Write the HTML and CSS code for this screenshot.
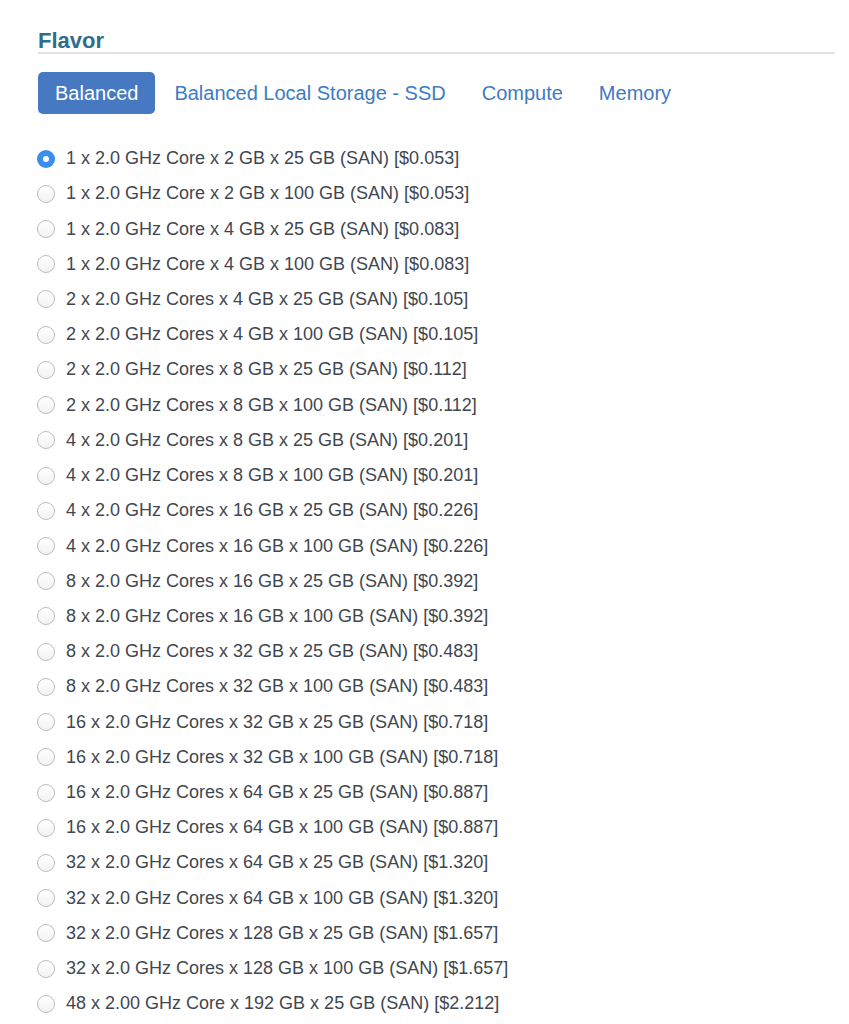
FILE: index.html
```html
<!DOCTYPE html>
<html>
<head>
<meta charset="utf-8">
<link rel="stylesheet" href="styles.css">
</head>
<body>
<div class="panel">
  <h2 class="title">Flavor</h2>
  <ul class="tabs">
    <li class="tab active">Balanced</li>
    <li class="tab">Balanced Local Storage - SSD</li>
    <li class="tab">Compute</li>
    <li class="tab">Memory</li>
  </ul>
  <ul class="options">
    <li class="opt"><span class="radio checked"></span><span class="label">1 x 2.0 GHz Core x 2 GB x 25 GB (SAN) [$0.053]</span></li>
    <li class="opt"><span class="radio"></span><span class="label">1 x 2.0 GHz Core x 2 GB x 100 GB (SAN) [$0.053]</span></li>
    <li class="opt"><span class="radio"></span><span class="label">1 x 2.0 GHz Core x 4 GB x 25 GB (SAN) [$0.083]</span></li>
    <li class="opt"><span class="radio"></span><span class="label">1 x 2.0 GHz Core x 4 GB x 100 GB (SAN) [$0.083]</span></li>
    <li class="opt"><span class="radio"></span><span class="label">2 x 2.0 GHz Cores x 4 GB x 25 GB (SAN) [$0.105]</span></li>
    <li class="opt"><span class="radio"></span><span class="label">2 x 2.0 GHz Cores x 4 GB x 100 GB (SAN) [$0.105]</span></li>
    <li class="opt"><span class="radio"></span><span class="label">2 x 2.0 GHz Cores x 8 GB x 25 GB (SAN) [$0.112]</span></li>
    <li class="opt"><span class="radio"></span><span class="label">2 x 2.0 GHz Cores x 8 GB x 100 GB (SAN) [$0.112]</span></li>
    <li class="opt"><span class="radio"></span><span class="label">4 x 2.0 GHz Cores x 8 GB x 25 GB (SAN) [$0.201]</span></li>
    <li class="opt"><span class="radio"></span><span class="label">4 x 2.0 GHz Cores x 8 GB x 100 GB (SAN) [$0.201]</span></li>
    <li class="opt"><span class="radio"></span><span class="label">4 x 2.0 GHz Cores x 16 GB x 25 GB (SAN) [$0.226]</span></li>
    <li class="opt"><span class="radio"></span><span class="label">4 x 2.0 GHz Cores x 16 GB x 100 GB (SAN) [$0.226]</span></li>
    <li class="opt"><span class="radio"></span><span class="label">8 x 2.0 GHz Cores x 16 GB x 25 GB (SAN) [$0.392]</span></li>
    <li class="opt"><span class="radio"></span><span class="label">8 x 2.0 GHz Cores x 16 GB x 100 GB (SAN) [$0.392]</span></li>
    <li class="opt"><span class="radio"></span><span class="label">8 x 2.0 GHz Cores x 32 GB x 25 GB (SAN) [$0.483]</span></li>
    <li class="opt"><span class="radio"></span><span class="label">8 x 2.0 GHz Cores x 32 GB x 100 GB (SAN) [$0.483]</span></li>
    <li class="opt"><span class="radio"></span><span class="label">16 x 2.0 GHz Cores x 32 GB x 25 GB (SAN) [$0.718]</span></li>
    <li class="opt"><span class="radio"></span><span class="label">16 x 2.0 GHz Cores x 32 GB x 100 GB (SAN) [$0.718]</span></li>
    <li class="opt"><span class="radio"></span><span class="label">16 x 2.0 GHz Cores x 64 GB x 25 GB (SAN) [$0.887]</span></li>
    <li class="opt"><span class="radio"></span><span class="label">16 x 2.0 GHz Cores x 64 GB x 100 GB (SAN) [$0.887]</span></li>
    <li class="opt"><span class="radio"></span><span class="label">32 x 2.0 GHz Cores x 64 GB x 25 GB (SAN) [$1.320]</span></li>
    <li class="opt"><span class="radio"></span><span class="label">32 x 2.0 GHz Cores x 64 GB x 100 GB (SAN) [$1.320]</span></li>
    <li class="opt"><span class="radio"></span><span class="label">32 x 2.0 GHz Cores x 128 GB x 25 GB (SAN) [$1.657]</span></li>
    <li class="opt"><span class="radio"></span><span class="label">32 x 2.0 GHz Cores x 128 GB x 100 GB (SAN) [$1.657]</span></li>
    <li class="opt"><span class="radio"></span><span class="label">48 x 2.00 GHz Core x 192 GB x 25 GB (SAN) [$2.212]</span></li>
  </ul>
</div>
</body>
</html>
```

FILE: styles.css
```css
html, body {
  margin: 0;
  padding: 0;
  background: #ffffff;
}
body {
  font-family: "Liberation Sans", Arial, Helvetica, sans-serif;
  color: #3f4750;
}
.panel {
  padding: 29px 14px 0 38px;
}
.title {
  margin: 0;
  font-size: 22px;
  line-height: 23px;
  font-weight: bold;
  color: #2f6d8c;
  border-bottom: 2px solid #e2e2e2;
}
.tabs {
  list-style: none;
  margin: 18px 0 0 0;
  padding: 0;
  display: flex;
  align-items: center;
}
.tab {
  height: 42px;
  line-height: 42px;
  padding: 0 17px;
  margin-right: 2px;
  font-size: 20px;
  color: #3e7bc4;
  border-radius: 5px;
}
.tab.active {
  background: #4679c1;
  color: #ffffff;
}
.options {
  list-style: none;
  margin: 27px 0 0 0;
  padding: 0;
}
.opt {
  height: 35.22px;
  display: flex;
  align-items: center;
  font-size: 18px;
}
.radio {
  box-sizing: border-box;
  width: 18px;
  height: 18px;
  border-radius: 50%;
  border: 1px solid #bdbdbd;
  background: linear-gradient(#ffffff, #f2f2f2);
  margin-left: -1px;
  margin-right: 11px;
  flex: none;
  display: flex;
  align-items: center;
  justify-content: center;
}
.radio.checked {
  border: none;
  background: #3b8ef0;
}
.radio.checked::after {
  content: "";
  width: 6px;
  height: 6px;
  border-radius: 50%;
  background: #ffffff;
}
.label {
  white-space: nowrap;
}
```
